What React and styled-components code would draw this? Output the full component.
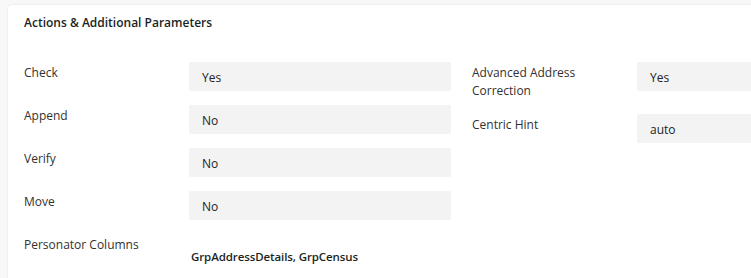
import React from 'react';
import styled, { createGlobalStyle } from 'styled-components';

const GlobalStyle = createGlobalStyle`
  html, body {
    margin: 0;
    padding: 0;
    background: #f8f8f8;
    overflow: hidden;
  }
  body {
    font-family: 'Open Sans', 'Noto Sans', sans-serif;
    color: #323130;
  }
`;

const Page = styled.div`
  padding: 5px 0 0 8px;
`;

const Card = styled.section`
  width: 743px;
  height: 273px;
  overflow: hidden;
  background: #ffffff;
  border-radius: 4px 0 0 0;
  box-shadow: 0 0 2px rgba(0, 0, 0, 0.14);
  padding: 9px 0 0 16px;
  box-sizing: border-box;
`;

const Title = styled.h2`
  margin: 0 0 30px;
  font-size: 12px;
  line-height: 18px;
  font-weight: 600;
  color: #201f1e;
`;

const Columns = styled.div`
  display: grid;
  grid-template-columns: 427px 427px;
  column-gap: 21px;
  align-items: start;
`;

const Column = styled.div`
  display: flex;
  flex-direction: column;
  gap: 14px;
`;

const Row = styled.div`
  display: grid;
  grid-template-columns: 165px 262px;
  align-items: start;
`;

const Label = styled.div`
  padding-top: 2px;
  padding-right: 50px;
  font-size: 12px;
  line-height: 18px;
  color: #323130;
`;

const Value = styled.div`
  height: 29px;
  box-sizing: border-box;
  padding: 2px 13px 0;
  display: flex;
  align-items: center;
  font-size: 12px;
  background: #f3f3f3;
  border-radius: 2px;
  color: #201f1e;
`;

const PlainValue = styled.div`
  padding: 14px 2px 0;
  font-size: 11.5px;
  line-height: 18px;
  font-weight: 600;
  letter-spacing: -0.1px;
  color: #201f1e;
`;

const leftFields = [
  { label: 'Check', value: 'Yes' },
  { label: 'Append', value: 'No' },
  { label: 'Verify', value: 'No' },
  { label: 'Move', value: 'No' },
];

const rightFields = [
  { label: 'Advanced Address Correction', value: 'Yes' },
  { label: 'Centric Hint', value: 'auto' },
];

const Field = ({ label, value }) => (
  <Row>
    <Label>{label}</Label>
    <Value>{value}</Value>
  </Row>
);

export default function App() {
  return (
    <Page>
      <GlobalStyle />
      <Card>
        <Title>Actions &amp; Additional Parameters</Title>
        <Columns>
          <Column>
            {leftFields.map(f => (
              <Field key={f.label} {...f} />
            ))}
            <Row>
              <Label>Personator Columns</Label>
              <PlainValue>GrpAddressDetails, GrpCensus</PlainValue>
            </Row>
          </Column>
          <Column>
            {rightFields.map(f => (
              <Field key={f.label} {...f} />
            ))}
          </Column>
        </Columns>
      </Card>
    </Page>
  );
}
